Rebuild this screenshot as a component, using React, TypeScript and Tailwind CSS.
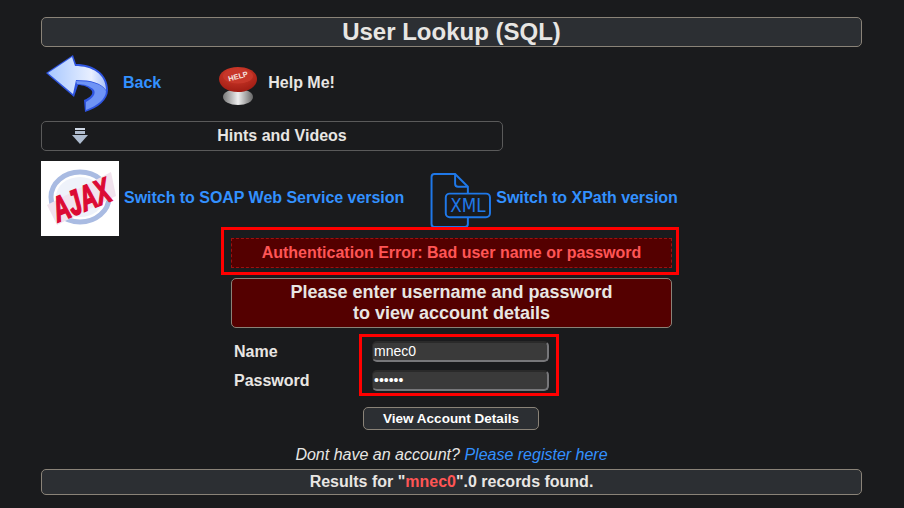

export default function App() {
  const font = { fontFamily: '"Liberation Sans", Arial, sans-serif' };
  const box = "border border-[#8a8378] rounded-[5px] bg-[#2c2f33]";
  return (
    <div style={font} className="w-[904px] h-[508px] overflow-hidden bg-[#1a1b1d] text-[#e8e6e3] flex flex-col pl-[41px] pr-[42px] pt-[17px]">
      <div className={`${box} h-[30px] flex items-center justify-center text-[24px] font-bold`}>User Lookup (SQL)</div>

      <div className="h-[62px] mt-[3px] flex items-center">
        <svg width="66" height="58" viewBox="0 0 66 58" className="ml-[5px] mt-[4px] shrink-0">
          <defs>
            <linearGradient id="bk" x1="0" x2="1" y1="0" y2="0">
              <stop offset="0" stopColor="#a8c8ff" />
              <stop offset="0.75" stopColor="#e8efff" />
              <stop offset="1" stopColor="#a9c2fb" />
            </linearGradient>
          </defs>
          <path d="M0 19 L27 1 L30 10 C48 10 62 20 62 36 C62 46 52 54 39 58 L38 46 C45 43 47 40 46 37 C43 33 37 31 32 31 L28 43 Z" fill="#2f55e0" />
          <path d="M2 19 L26 3 L29 12 C46 12 60 20 60 36 C55 29 46 26 30 26 L27 40 Z" fill="url(#bk)" />
          <path d="M30 27 C46 27 56 30 60 37 C60 45 51 52 40 56 L40 48 C47 44 50 40 48 36 C44 32 38 30 31 30 Z" fill="#6f94f5" />
        </svg>
        <a className="text-[#3391ff] text-[16px] font-bold ml-[11px] mt-[4px]">Back</a>
        <svg width="42" height="42" viewBox="0 0 42 42" className="ml-[57px] mt-[12px] shrink-0">
          <defs>
            <linearGradient id="bs" x1="0" x2="1" y1="0" y2="0">
              <stop offset="0" stopColor="#777" />
              <stop offset="0.5" stopColor="#eee" />
              <stop offset="1" stopColor="#666" />
            </linearGradient>
            <radialGradient id="rd" cx="0.45" cy="0.25" r="0.8">
              <stop offset="0" stopColor="#d8402e" />
              <stop offset="1" stopColor="#9c1a12" />
            </radialGradient>
          </defs>
          <ellipse cx="20" cy="31" rx="15" ry="8" fill="url(#bs)" />
          <path d="M1 13 C1 6 9 1 20 1 C31 1 39 6 39 13 C39 20 31 26 20 26 C9 26 1 20 1 13 Z" fill="url(#rd)" />
          <ellipse cx="20" cy="10" rx="15" ry="7.5" fill="#c7372a" />
          <text x="20" y="13" textAnchor="middle" fontSize="7.5" fontWeight="700" fill="#f6e6e0" transform="rotate(-15 20 10)">HELP</text>
        </svg>
        <span className="text-[16px] font-bold ml-[8px] mt-[4px]">Help Me!</span>
      </div>

      <div className="mt-[9px] w-[462px] h-[30px] border border-[#5a5a5a] rounded-[5px] flex items-center justify-center relative text-[16px] font-bold pl-[20px]">
        <svg width="16" height="16" viewBox="0 0 16 16" className="absolute left-[30px] top-[6px]">
          <rect x="3" y="0" width="10" height="2" fill="#cfd8e6" />
          <rect x="3" y="3" width="10" height="3" fill="#b0bccd" />
          <path d="M0 7 H16 L8 16 Z" fill="#aebccf" />
        </svg>
        Hints and Videos
      </div>

      <div className="mt-[10px] h-[66px] flex items-start">
        <div className="w-[78px] h-[75px] bg-white shrink-0 flex items-center justify-center">
          <svg width="78" height="75" viewBox="0 0 78 75" className="overflow-visible">
            <ellipse cx="39" cy="36" rx="29" ry="25" fill="none" stroke="#a9bbe2" strokeWidth="5" />
            <ellipse cx="39" cy="36" rx="24" ry="20" fill="#eef2fa" />
            <path d="M6 44 L70 11 L75 35 L16 64 Z" fill="#f1e3ee" />
            <text x="40" y="51" textAnchor="middle" fontSize="35" fontWeight="700" fontStyle="italic" fill="#dc0a34" stroke="#dc0a34" strokeWidth="1.6" textLength="60" lengthAdjust="spacingAndGlyphs" transform="rotate(-22 40 38)">AJAX</text>
          </svg>
        </div>
        <a className="text-[#3391ff] text-[16px] font-bold ml-[5px] mt-[25px] tracking-[-0.03px] whitespace-nowrap">Switch to SOAP Web Service version</a>
        <svg width="62" height="55" viewBox="0 0 62 56" className="ml-[26px] mt-[12px] shrink-0" fill="none" stroke="#1f78e8" strokeWidth="2">
          <path d="M38 45 V52 Q38 55 35 55 H4 Q1 55 1 52 V4 Q1 1 4 1 H25 L38 14 V21" />
          <path d="M25 1 V11 Q25 14 28 14 H38" />
          <rect x="15.5" y="21" width="45" height="24" rx="4" />
          <text x="38" y="40" textAnchor="middle" fontSize="19" fontFamily="'DejaVu Sans', sans-serif" fill="#1f78e8" stroke="none" textLength="36" lengthAdjust="spacingAndGlyphs">XML</text>
        </svg>
        <a className="text-[#3391ff] text-[16px] font-bold ml-[4px] mt-[25px] tracking-[-0.03px] whitespace-nowrap">Switch to XPath version</a>
      </div>

      <div className="ml-[180px] w-[458px] h-[48px] border-[3px] border-[#ff0000] bg-[#1a1b1d] pl-[7px] pr-[4px] pt-[8px] relative">
        <div className="h-[30px] border border-dashed border-[#a01010] bg-[#540000] text-[#ff5555] text-[16px] font-bold flex items-center justify-center">
          Authentication Error: Bad user name or password
        </div>
      </div>

      <div className="ml-[190px] mt-[3px] w-[441px] h-[50px] border border-[#8a8378] rounded-[5px] bg-[#540000] text-[18px] leading-[21px] font-bold text-center flex flex-col justify-center">
        <div>Please enter username and password</div>
        <div>to view account details</div>
      </div>

      <div className="ml-[193px] mt-[6px] flex items-start">
        <div className="w-[125px] text-[16px] font-bold pt-[3px] leading-[29px]">
          <div>Name</div>
          <div>Password</div>
        </div>
        <div className="w-[200px] h-[62px] border-[3px] border-[#ff0000] pl-[10px] pt-[4px] flex flex-col gap-[8px]">
          <div className="w-[177px] h-[21px] rounded-[5px] bg-[#3a3a3a] border-t-2 border-l border-[#2a2a2a] border-b-2 border-r-2 !border-b-[#77777a] !border-r-[#77777a] text-[14px] text-white pl-[1px] leading-[17px]">mnec0</div>
          <div className="w-[177px] h-[21px] rounded-[5px] bg-[#3a3a3a] border-t-2 border-l border-[#2a2a2a] border-b-2 border-r-2 !border-b-[#77777a] !border-r-[#77777a] text-[14px] text-white pl-[1px] leading-[17px]">••••••</div>
        </div>
      </div>

      <div className="mt-[11px] ml-[322px] w-[176px] h-[23px] border border-[#8a8378] rounded-[5px] bg-[#2c2f33] text-[13.5px] font-bold text-white flex items-center justify-center pt-[1px]">View Account Details</div>

      <div className="mt-[15px] text-center italic text-[16px] leading-[20px]">
        Dont have an account? <a className="text-[#3391ff]">Please register here</a>
      </div>

      <div className={`${box} mt-[4px] h-[26px] flex items-center justify-center text-[16px] font-bold`}>
        Results for "<span className="text-[#ff5555]">mnec0</span>".0 records found.
      </div>
    </div>
  );
}
